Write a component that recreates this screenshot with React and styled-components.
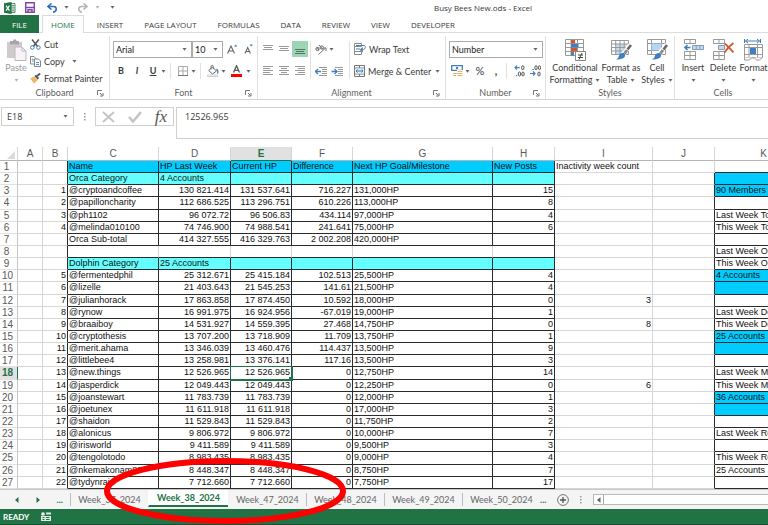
import React, { useState } from "react";
import styled, { createGlobalStyle, css } from "styled-components";

const UI_FONT = 'Lato, "Open Sans", sans-serif';
const WIDE_FONT = '"Open Sans", "Noto Sans", sans-serif';
const CELL_FONT = '"Liberation Sans", Arial, sans-serif';
const GREEN = "#217346";
const BLUE = "#3f7fbf";
const GRID = "#d6d6d6";
const INK = "#2b2b2b";

const GlobalStyle = createGlobalStyle`
  * {
    box-sizing: border-box;
  }
  body {
    margin: 0;
    background: #ffffff;
    font-family: ${UI_FONT};
    font-size: 9px;
    color: #3a3a3a;
  }
  button, input, select {
    font: inherit;
    color: inherit;
    margin: 0;
    padding: 0;
    border: 0;
    background: none;
  }
  svg {
    display: block;
    flex-shrink: 0;
  }
`;

const Window = styled.div`
  position: relative;
  display: flex;
  flex-direction: column;
  height: 100vh;
  overflow: hidden;
`;

/* ---------- title bar ---------- */

const TitleBar = styled.header`
  display: grid;
  grid-template-columns: 1fr auto 1fr;
  align-items: center;
  height: 15px;
  flex-shrink: 0;
`;

const QuickAccess = styled.div`
  display: flex;
  align-items: center;
  height: 12px;
  padding-left: 4px;
  gap: 4px;
`;

const Title = styled.h1`
  margin: 0;
  padding-left: 198px;
  font-family: ${WIDE_FONT};
  font-size: 8px;
  line-height: 14px;
  font-weight: 400;
  white-space: nowrap;
`;

const IconButton = styled.button`
  display: flex;
  align-items: center;
  justify-content: center;
  height: 16px;
  min-width: ${({ $w }) => $w || 16}px;
  flex-shrink: 0;
  background: ${({ $on }) => ($on ? "#9fd5b7" : "transparent")};
`;

/* ---------- ribbon ---------- */

const TabList = styled.nav`
  display: flex;
  gap: 1px;
  height: 18px;
  flex-shrink: 0;
  border-bottom: 1px solid #dcdcdc;
  font-family: ${WIDE_FONT};
  font-size: 8px;
`;

const RibbonTab = styled.button`
  height: 18px;
  padding: 0 9px;
  line-height: 16px;
  white-space: nowrap;
  border: 1px solid transparent;
  border-bottom: 0;

  ${({ $active }) =>
    $active &&
    css`
      background: #ffffff;
      border-color: #dcdcdc;
      color: ${GREEN};
      margin: 0 2px;
      padding: 0 8px;
    `}

  ${({ $file }) =>
    $file &&
    css`
      width: 39px;
      background: ${GREEN};
      color: #ffffff;
    `}
`;

const Ribbon = styled.div`
  display: flex;
  height: 67px;
  flex-shrink: 0;
  padding-top: 3px;
  border-bottom: 1px solid #d4d4d4;
  overflow: hidden;
`;

const Group = styled.section`
  display: flex;
  flex-direction: column;
  width: ${({ $w }) => $w}px;
  flex-shrink: 0;
  border-right: 1px solid #e1e1e1;
`;

const GroupBody = styled.div`
  flex: 1;
  display: flex;
  padding: ${({ $pad }) => $pad || "0"};
`;

const GroupFooter = styled.div`
  display: grid;
  grid-template-columns: 12px 1fr 12px;
  align-items: center;
  height: 12px;
  line-height: 12px;
  text-align: center;
  color: #5f5f5f;

  span {
    grid-column: 2;
  }
`;

const Stack = styled.div`
  display: flex;
  flex-direction: column;
  gap: ${({ $gap }) => $gap || 0}px;
`;

const Row = styled.div`
  display: flex;
  align-items: center;
  height: 16px;
  gap: ${({ $gap }) => $gap || 0}px;
`;

const Divider = styled.span`
  width: 1px;
  height: ${({ $h }) => $h || 16}px;
  margin: 0 ${({ $m }) => $m || 4}px;
  background: #e1e1e1;
  flex-shrink: 0;
`;

const LabelButton = styled.button`
  display: flex;
  align-items: center;
  gap: 3px;
  height: 16px;
  white-space: nowrap;
`;

const BigButton = styled.button`
  display: flex;
  flex-direction: column;
  align-items: center;
  width: ${({ $w }) => $w}px;
  padding-top: 3px;
  flex-shrink: 0;
  line-height: 12px;
  color: ${({ $dim }) => ($dim ? "#9a9a9a" : "inherit")};
  white-space: nowrap;

  > svg {
    margin-bottom: 1px;
  }
`;

const BigLine = styled.span`
  display: flex;
  align-items: center;
  justify-content: center;
  gap: 3px;
  height: 12px;
`;

const SelectBox = styled.label`
  display: grid;
  grid-template-columns: 1fr 9px;
  align-items: center;
  width: ${({ $w }) => $w}px;
  height: 17px;
  border: 1px solid #ababab;
  color: #222222;
  background: #ffffff;

  select {
    grid-area: 1 / 1 / 2 / 3;
    width: 100%;
    height: 15px;
    padding-left: 2px;
    appearance: none;
    outline: none;
  }
  svg {
    grid-area: 1 / 2 / 2 / 3;
    pointer-events: none;
  }
`;

const Letter = styled.span`
  font-size: ${({ $size }) => $size || 9}px;
  line-height: 12px;
  font-weight: ${({ $bold }) => ($bold ? 700 : 400)};
  font-style: ${({ $italic }) => ($italic ? "italic" : "normal")};
  text-decoration: ${({ $under }) => ($under ? "underline" : "none")};
`;

/* ---------- formula bar ---------- */

const FormulaBar = styled.div`
  display: flex;
  align-items: flex-start;
  height: 47px;
  flex-shrink: 0;
  padding: 7px 0 8px 1px;
  font-family: ${WIDE_FONT};
  font-size: 9px;
`;

const NameBox = styled.label`
  display: flex;
  align-items: center;
  width: 73px;
  height: 19px;
  padding: 0 5px;
  border: 1px solid #d0d0d0;

  input {
    flex: 1;
    min-width: 0;
    outline: none;
  }
`;

const Grip = styled.span`
  display: flex;
  align-items: center;
  justify-content: center;
  width: 21px;
  height: 19px;
`;

const FormulaTools = styled.div`
  display: flex;
  align-items: center;
  justify-content: space-between;
  width: 79px;
  height: 19px;
  padding: 0 6px;
  margin-right: 2px;
  border: 1px solid #d0d0d0;
`;

const FormulaInput = styled.input`
  && {
    flex: 1;
    align-self: stretch;
    padding: 0 8px 13px;
    border: 1px solid #d0d0d0;
    border-right: 0;
    outline: none;
  }
`;

/* ---------- sheet ---------- */

const SheetArea = styled.main`
  flex: 1;
  min-height: 0;
  overflow: hidden;
`;

const SheetTable = styled.table`
  width: 813px;
  height: 100%;
  table-layout: fixed;
  border-collapse: separate;
  border-spacing: 0;
  font-family: ${CELL_FONT};
  font-size: 9px;
  line-height: 11px;
  color: #111111;
`;

const HeadRow = styled.tr`
  height: 14px;
`;

const ColHead = styled.th`
  padding: 0;
  font-size: 10px;
  font-weight: ${({ $active }) => ($active ? 700 : 400)};
  color: ${({ $active }) => ($active ? GREEN : "#5a5a5a")};
  background: ${({ $active }) => ($active ? "#e1e1e1" : "#ffffff")};
  border-right: 1px solid ${GRID};
  border-bottom: 1px solid ${({ $active }) => ($active ? GREEN : "#b5b5b5")};
`;

const Corner = styled(ColHead)`
  vertical-align: bottom;

  svg {
    margin: 0 0 1px 7px;
  }
`;

const RowHead = styled.th`
  padding: 0 4px 0 0;
  font-size: 10px;
  text-align: ${({ $wide }) => ($wide ? "right" : "center")};
  font-weight: ${({ $active }) => ($active ? 700 : 400)};
  color: ${({ $active }) => ($active ? GREEN : "#5a5a5a")};
  background: ${({ $active }) => ($active ? "#e1e1e1" : "#ffffff")};
  border-right: 1px solid ${({ $active }) => ($active ? GREEN : "#c4c4c4")};
  border-bottom: 1px solid #e1e1e1;
`;

const FILLS = { head: "#00ccff", band: "#66ffff" };

const Cell = styled.td`
  padding: 0 1px;
  text-align: ${({ $num }) => ($num ? "right" : "left")};
  white-space: nowrap;
  overflow: hidden;
  background: ${({ $fill }) => FILLS[$fill] || "#ffffff"};
  border-right: 1px solid ${({ $right }) => ($right ? INK : GRID)};
  border-bottom: 1px solid ${({ $bottom }) => ($bottom ? INK : GRID)};

  ${({ $selected }) =>
    $selected &&
    css`
      position: relative;
      overflow: visible;
      outline: 1px solid ${GREEN};
      border-color: ${GREEN};

      &::after {
        content: "";
        position: absolute;
        right: -2px;
        bottom: -2px;
        width: 4px;
        height: 4px;
        background: ${GREEN};
      }
    `}
`;

/* ---------- bottom ---------- */

const SheetTabs = styled.nav`
  display: flex;
  align-items: center;
  height: 20px;
  flex-shrink: 0;
  background: #f4f4f4;
  border-top: 1px solid #c8c8c8;
`;

const TabScroll = styled.div`
  display: flex;
  align-items: center;
  justify-content: space-between;
  width: 70px;
  padding: 0 7px 0 15px;
  flex-shrink: 0;
  color: ${GREEN};
  font-weight: 700;
`;

const SheetTab = styled.button`
  width: ${({ $active }) => ($active ? 80 : 78)}px;
  height: ${({ $active }) => ($active ? 17 : 13)}px;
  flex-shrink: 0;
  border-left: 1px solid ${({ $line }) => ($line ? "#bdbdbd" : "transparent")};
  color: #666666;
  white-space: nowrap;
  align-self: ${({ $active }) => ($active ? "flex-start" : "center")};

  ${({ $active }) =>
    $active &&
    css`
      background: #ffffff;
      color: ${GREEN};
      font-weight: 700;
      border-bottom: 2px solid ${GREEN};
    `}
`;

const TabTail = styled.div`
  display: flex;
  align-items: center;
  gap: 11px;
  padding-right: 11px;
  color: ${GREEN};
  font-weight: 700;
`;

const ScrollTrack = styled.div`
  display: flex;
  flex: 1;
  height: 11px;
  border: 1px solid #b9b9b9;
  border-right: 0;
  background: #ffffff;
`;

const ScrollArrow = styled.button`
  display: flex;
  align-items: center;
  justify-content: center;
  width: 10px;
  border-right: 1px solid #ababab;
`;

const StatusBar = styled.footer`
  display: flex;
  align-items: center;
  gap: 12px;
  height: 16px;
  flex-shrink: 0;
  padding-left: 3px;
  color: #ffffff;
  background: ${GREEN};
  border-bottom: 1px solid #14522f;
  font-size: 8px;
  font-weight: 700;
`;

const Highlight = styled.svg`
  position: absolute;
  left: 104px;
  bottom: 1px;
  pointer-events: none;
`;

/* ---------- icons ---------- */

const Caret = ({ color = "#666666" }) => (
  <svg width="5" height="3" viewBox="0 0 5 3">
    <path d="M0.5 0h4L2.500 2.700z" fill={color} />
  </svg>
);

const Launcher = () => (
  <svg width="7" height="7" viewBox="0 0 7 7" fill="none" stroke="#777">
    <path d="M0.500 5V0.500H5M3 3l2.500 2.500M6 3v3H3" />
  </svg>
);

const ExcelLogo = () => (
  <svg width="12" height="12" viewBox="0 0 12 12">
    <path d="M7 1.500h4v9H7z" fill="#fff" stroke={GREEN} strokeWidth="0.800" />
    <path d="M8 3.500h2.500M8 5.200h2.500M8 7h2.500M8 8.800h2.500" stroke={GREEN} strokeWidth="0.800" />
    <path d="M0 1.200L7.500 0v12L0 10.800z" fill={GREEN} />
    <path d="M2 3.600l3.500 5M5.500 3.600L2 8.600" stroke="#fff" strokeWidth="1.200" />
  </svg>
);

const SaveIcon = () => (
  <svg width="10" height="11" viewBox="0 0 10 11">
    <path d="M0.700 0.700h8.600v9.600H0.700z" fill="#fff" stroke="#8047a8" strokeWidth="1.400" />
    <path d="M0.700 5.500h8.600M3 10V7.800h4V10" fill="none" stroke="#8047a8" strokeWidth="1.500" />
  </svg>
);

const UndoIcon = ({ color = "#2b6cb5", flip }) => (
  <svg width="11" height="10" viewBox="0 0 11 10">
    <g transform={flip ? "translate(11 0) scale(-1 1)" : undefined} fill="none" stroke={color}>
      <path d="M4.500 0.500L1 3.500l3.500 3" strokeWidth="1.600" />
      <path d="M1 3.500h5.500c3.500 0 4 5-0.500 5.800" strokeWidth="1.500" />
    </g>
  </svg>
);

const PasteIcon = () => (
  <svg width="21" height="22" viewBox="0 0 21 22">
    <path d="M1 3h15v16H1z" fill="#cfcace" />
    <path d="M4 2h3a1.800 1.800 0 0 1 3.600 0H13v3.500H4z" fill="#aaa4a8" />
    <path d="M9 8h7l4 4v9.500H9z" fill="#f6f2f5" stroke="#bdb8bc" />
    <path d="M16 8v4h4" fill="none" stroke="#bdb8bc" />
  </svg>
);

const CutIcon = () => (
  <svg width="11" height="11" viewBox="0 0 11 11" fill="none">
    <path d="M2 0.500l5.600 7M8.800 0.500L3.300 7.500" stroke="#555" strokeWidth="1.500" />
    <circle cx="2.300" cy="8.500" r="1.800" stroke={BLUE} />
    <circle cx="8.400" cy="8.500" r="1.800" stroke={BLUE} />
  </svg>
);

const CopyIcon = () => (
  <svg width="11" height="11" viewBox="0 0 11 11" fill="#fff" stroke="#777" strokeWidth="0.900">
    <path d="M0.500 0.500h3.500l2 2v5.500H0.500z" />
    <path d="M4.500 3h4l2 2v5.500H4.500z" />
    <path d="M1.800 3.200h2M1.800 5h2M6 6.500h3M6 8.400h3" stroke={BLUE} />
  </svg>
);

const PainterIcon = () => (
  <svg width="11" height="11" viewBox="0 0 11 11">
    <path d="M0.300 5.500L4 3.500l3.500 3.800L4 10.500z" fill="#eab566" />
    <path d="M4.300 3l1.800-1.300L9 5 7.800 6.800z" fill="#555" />
    <path d="M7 3l3.200-2.500" stroke="#555" strokeWidth="1.800" />
  </svg>
);

const BordersIcon = () => (
  <svg width="10" height="10" viewBox="0 0 10 10" fill="none" stroke="#aaa">
    <path d="M0.500 0.500h9v9h-9zM5 0.500v9M0.500 5h9" />
    <path d="M0 9.500h10" stroke="#777" />
  </svg>
);

const BucketIcon = () => (
  <svg width="12" height="12" viewBox="0 0 12 12" fill="none" stroke="#666">
    <path d="M5.500 2L9.500 6 5.500 9 1.700 5.500z" fill="#fff" />
    <path d="M4 4.500V1.500C4 0 6.300 0 6.300 1.500V4" strokeWidth="0.900" />
    <path d="M9.500 4c1.500 1 1.500 3 1 4.500" stroke={BLUE} strokeWidth="1.300" />
    <path d="M0.500 10h10v1.500h-10z" stroke="#bbb" fill="#fff" strokeWidth="0.700" />
  </svg>
);

const FontColorIcon = () => (
  <svg width="11" height="12" viewBox="0 0 11 12">
    <path d="M2.500 7.500L5.500 0.800l3 6.700M3.500 5.400h4" fill="none" stroke="#555" strokeWidth="1.300" />
    <path d="M0 9h11v3H0z" fill="#ff0000" />
  </svg>
);

const GrowIcon = ({ down }) => (
  <svg width={down ? 9 : 11} height="11" viewBox={down ? "1 0 9 11" : "0 0 11 11"}>
    <path
      d={down ? "M2 9.500l2.700-6 2.700 6M3 7.500h3.400" : "M0.500 9.500L4 2l3.500 7.500M1.800 7h4.400"}
      fill="none"
      stroke="#666"
      strokeWidth="1.100"
    />
    <path d={down ? "M6.500 0.500h3.500L8.200 2.500z" : "M7 2.500h3.500L8.700 0.500z"} fill={BLUE} />
  </svg>
);

const LINES = {
  top: "M0 2.500h10M1 4.500h8M0 6.500h10",
  middle: "M0 3.500h10M1 5.500h8M0 7.500h10",
  bottom: "M0 6.500h10M1 8.500h8M0 10.500h10",
  left: "M0 1.500h10M0 3.500h7M0 5.500h10M0 7.500h7M0 9.500h10",
  center: "M0 1.500h10M2 3.500h6M0 5.500h10M2 7.500h6M0 9.500h10",
  right: "M0 1.500h10M3 3.500h7M0 5.500h10M3 7.500h7M0 9.500h10",
};

const LinesIcon = ({ kind }) => (
  <svg width="10" height="12" viewBox="0 0 10 12">
    <path d={LINES[kind]} stroke={kind === "bottom" ? "#4f7762" : "#9a9a9a"} fill="none" />
  </svg>
);

const OrientIcon = () => (
  <svg width="12" height="11" viewBox="0 0 12 11" fill="none" stroke="#666">
    <circle cx="2.500" cy="5" r="1.600" />
    <path d="M3.800 6.300L2 3.200M4 1l4 4.500" />
    <circle cx="6.800" cy="3.500" r="1.600" />
    <path d="M3.500 10.500L10.500 4M8 4h3v3" stroke="#777" />
  </svg>
);

const IndentIcon = ({ out }) => (
  <svg width="12" height="11" viewBox="0 0 12 11" fill="none">
    <path d="M4 1.500h8M7 3.500h5M7 5.500h5M7 7.500h5M4 9.500h8" stroke="#999" />
    <path d="M0.500 5.500h5.500" stroke={BLUE} strokeWidth="1.500" />
    <path d={out ? "M3 3L0.500 5.500 3 8" : "M3.500 3L6 5.500 3.500 8"} stroke={BLUE} strokeWidth="1.400" />
  </svg>
);

const WrapIcon = () => (
  <svg width="12" height="12" viewBox="0 0 12 12" fill="none" stroke="#888">
    <path d="M0.500 0.500h7v3h-7zM0.500 8.500h7v3h-7zM0.500 3.500v5" />
    <path d="M2 2.500h8.500c1.500 1.500 1 4-2 4.200M2 6h4" stroke={BLUE} />
    <path d="M8.500 4.500L6 6.800l2.500 2z" fill={BLUE} />
  </svg>
);

const MergeIcon = () => (
  <svg width="11" height="12" viewBox="0 0 11 12" fill="none" stroke="#777">
    <path d="M0.500 0.500h10v11H0.500zM0.500 3h10M0.500 9h10M5.500 0.500V3M5.500 9v2.500" />
    <path d="M1.500 3.500h8v5h-8z" fill="#dcebf8" stroke="none" />
    <path d="M2 6h7M3.500 4.500L2 6l1.500 1.500M7.500 4.500L9 6 7.500 7.500" stroke={BLUE} />
  </svg>
);

const MoneyIcon = () => (
  <svg width="12" height="12" viewBox="0 0 12 12" fill="none">
    <path d="M0.700 0.700h10.600v4.600H0.700z" stroke={BLUE} strokeWidth="1.300" />
    <circle cx="6" cy="3" r="1.200" fill={BLUE} />
    <path d="M6 5h6v6H6z" fill="#fff" />
    <path d="M6.500 6.500h5M6.500 8.500h5M6.500 10.500h5M2 8.500h4M2 10.500h3" stroke="#e8ad58" strokeWidth="1.200" />
  </svg>
);

const DecimalIcon = ({ less }) => (
  <svg width="11" height="12" viewBox="0 0 11 12" fill="none" stroke="#555">
    <ellipse cx={less ? 6 : 8.8} cy="2.700" rx="1.200" ry="2" />
    {less && <ellipse cx="9.500" cy="2.700" rx="1.100" ry="2" />}
    {!less && <ellipse cx="5.500" cy="9" rx="1.200" ry="2" />}
    <ellipse cx="9" cy="9" rx="1.200" ry="2" />
    <path d={less ? "M2.500 4.500h1.200" : "M2 10.700h1.200"} />
    <path
      d={less ? "M0 8.500h5M3 6.500l2 2-2 2" : "M0.700 2.700h5M3 0.700l-2 2 2 2"}
      stroke={BLUE}
      strokeWidth="1.200"
    />
  </svg>
);

const ConditionalIcon = () => (
  <svg width="22" height="22" viewBox="0 0 22 22" fill="none">
    <path d="M1.500 0.500h18v16h-18zM1.500 4.500h18M1.500 8.500h18M1.500 12.500h18M7 0.500v16M13.500 0.500v16" stroke="#999" />
    <path d="M7 1h4v3.500H7zM7 9h6v3.500H7z" fill="#d9532c" />
    <path d="M7 5h7.500v3.500H7zM7 13h3v3.500H7z" fill={BLUE} />
    <path d="M11.500 12.500h10v9h-10z" fill="#fff" stroke="#888" />
    <path d="M14 16h5M14 18.500h5M18 14l-3 6.500" stroke="#444" />
  </svg>
);

const Brush = () => (
  <>
    <path d="M21 5.500l-8 9.500" stroke="#fff" strokeWidth="4.500" />
    <path d="M21 6l-3.500 4.500" stroke="#666" strokeWidth="2.600" />
    <path d="M17 11l-2.500 3.500" stroke="#8a8a8a" strokeWidth="3" />
    <path d="M13.500 14c2 0.500 2.300 3.500 0 5-2.300 1.400-5 1.500-7.500 1.500 2-1 2.500-2.500 3.300-4.500 0.700-1.700 2.400-2.400 4.200-2z" fill={BLUE} />
  </>
);

const TableIcon = () => (
  <svg width="22" height="22" viewBox="0 0 22 22" fill="none">
    <path d="M5.500 5h12v10h-12z" fill="#c5dcf0" />
    <path d="M1.500 1.500h17v14h-17zM1.500 5h17M1.500 8.500h17M1.500 12h17M5.700 1.500v14M10 1.500v14M14.200 1.500v14" stroke="#999" />
    <Brush />
  </svg>
);

const CellStylesIcon = () => (
  <svg width="22" height="22" viewBox="0 0 22 22" fill="none">
    <path d="M1.500 0.500h18v15h-18zM1.500 4.500h18M1.500 11.500h18M5.500 0.500v15M15.500 0.500v15" stroke="#999" />
    <path d="M5.500 4.500h10v7h-10z" fill="#b9d4ec" stroke="#8fb4d6" />
    <Brush />
  </svg>
);

const InsertIcon = () => (
  <svg width="21" height="22" viewBox="0 0 21 22" fill="none" stroke="#999">
    <path d="M1.500 0.500h11v4h-11zM7 0.500v4M1.500 12.500h11v8h-11zM1.500 16.500h11M7 12.500v8" />
    <path d="M9.500 6.500h11v4h-11zM13.200 6.500v4M16.800 6.500v4" fill="#c5dcf0" stroke="#7f9db8" />
    <path d="M2 8.500h5.500M4.500 6L2 8.500 4.500 11" stroke={BLUE} strokeWidth="1.600" />
  </svg>
);

const DeleteIcon = () => (
  <svg width="21" height="22" viewBox="0 0 21 22" fill="none" stroke="#999">
    <path d="M0.500 0.500h11v4h-11zM6 0.500v4M0.500 12.500h11v8h-11zM0.500 16.500h11M6 12.500v8" />
    <path d="M5.500 6.500h6v4h-6z" fill="#c5dcf0" stroke="#7f9db8" />
    <path d="M11.500 4.500c3 2 6 5.500 9 9M20.500 4c-3.500 2.500-6.500 5.500-9 9.500" stroke="#d9532c" strokeWidth="1.800" />
  </svg>
);

const FormatIcon = () => (
  <svg width="21" height="22" viewBox="0 0 21 22" fill="none" stroke="#999">
    <path d="M1.500 0v4M17.500 0v4M2.500 2h14M5 0l-2.500 2L5 4M14 0l2.500 2L14 4" stroke={BLUE} />
    <path d="M1.500 5.500h18v13h-18zM1.500 8.500h18M1.500 15.500h18M6 5.500v13M14.500 5.500v13" />
    <path d="M7 9h6v6H7z" fill={BLUE} stroke="none" />
    <path d="M1.500 18.500v2.500h5l2-2h3l2 2h3l3-2.500" fill="#fff" />
  </svg>
);

const CancelIcon = () => (
  <svg width="13" height="12" viewBox="0 0 13 12">
    <path d="M1 1l11 10M12 1L1 11" stroke="#c3c3c3" strokeWidth="1.800" />
  </svg>
);

const EnterIcon = () => (
  <svg width="14" height="12" viewBox="0 0 14 12">
    <path d="M1 6l4 4.500L13 1" fill="none" stroke="#c3c3c3" strokeWidth="2.500" />
  </svg>
);

const FxLabel = styled.em`
  font-family: "Liberation Serif", "Times New Roman", serif;
  font-size: 17px;
  line-height: 16px;
  color: #555555;
`;

const Dots = () => (
  <svg width="2" height="8" viewBox="0 0 2 8" fill="#999">
    <path d="M0 0h1.500v1.500H0zM0 3h1.500v1.500H0zM0 6h1.500v1.500H0z" />
  </svg>
);

const Arrow = ({ left, color = GREEN }) => (
  <svg width="4" height="6" viewBox="0 0 4 6">
    <path d={left ? "M3.500 0v6L0 3z" : "M0.500 0v6L4 3z"} fill={color} />
  </svg>
);

const PlusIcon = () => (
  <svg width="12" height="12" viewBox="0 0 12 12" fill="none" stroke="#777">
    <circle cx="6" cy="6" r="5.400" />
    <path d="M6 3v6M3 6h6" stroke="#555" strokeWidth="1.300" />
  </svg>
);

const MacroIcon = () => (
  <svg width="10" height="9" viewBox="0 0 10 9">
    <circle cx="2" cy="2" r="1.800" fill="#fff" />
    <path d="M5 0.500h5v2H5zM0 4h10v5H0z" fill="#dfeee5" />
    <path d="M1.500 5.500h2M5 5.500h3.500M1.500 7.500h2M5 7.500h3.500" stroke={GREEN} />
  </svg>
);

/* ---------- data ---------- */

const TABS = ["HOME", "INSERT", "PAGE LAYOUT", "FORMULAS", "DATA", "REVIEW", "VIEW", "DEVELOPER"];
const SHEETS = ["Week_37_2024", "Week_38_2024", "Week_47_2024", "Week_48_2024", "Week_49_2024", "Week_50_2024"];
const COLS = ["A", "B", "C", "D", "E", "F", "G", "H", "I", "J", "K"];
const WIDTHS = [18, 25, 25, 91, 72, 61, 61, 140, 62, 98, 62, 98];

// B, C, D, E, F, G, H
const ROWS = [
  ["", "Name", "HP Last Week", "Current HP", "Difference", "Next HP Goal/Milestone", "New Posts"],
  ["", "Orca Category", "4 Accounts", "", "", "", ""],
  ["1", "@cryptoandcoffee", "130 821.414", "131 537.641", "716.227", "131,000HP", "15"],
  ["2", "@papilloncharity", "112 686.525", "113 296.751", "610.226", "113,000HP", "8"],
  ["3", "@ph1102", "96 072.72", "96 506.83", "434.114", "97,000HP", "4"],
  ["4", "@melinda010100", "74 746.900", "74 988.541", "241.641", "75,000HP", "6"],
  ["", "Orca Sub-total", "414 327.555", "416 329.763", "2 002.208", "420,000HP", ""],
  ["", "", "", "", "", "", ""],
  ["", "Dolphin Category", "25 Accounts", "", "", "", ""],
  ["5", "@fermentedphil", "25 312.671", "25 415.184", "102.513", "25,500HP", "4"],
  ["6", "@lizelle", "21 403.643", "21 545.253", "141.61", "21,500HP", "4"],
  ["7", "@julianhorack", "17 863.858", "17 874.450", "10.592", "18,000HP", "0"],
  ["8", "@rynow", "16 991.975", "16 924.956", "-67.019", "19,000HP", "1"],
  ["9", "@braaiboy", "14 531.927", "14 559.395", "27.468", "14,750HP", "0"],
  ["10", "@cryptothesis", "13 707.200", "13 718.909", "11.709", "13,750HP", "1"],
  ["11", "@merit.ahama", "13 346.039", "13 460.476", "114.437", "13,500HP", "9"],
  ["12", "@littlebee4", "13 258.981", "13 376.141", "117.16", "13,500HP", "3"],
  ["13", "@new.things", "12 526.965", "12 526.965", "0", "12,750HP", "14"],
  ["14", "@jasperdick", "12 049.443", "12 049.443", "0", "12,250HP", "0"],
  ["15", "@joanstewart", "11 783.739", "11 783.739", "0", "12,000HP", "1"],
  ["16", "@joetunex", "11 611.918", "11 611.918", "0", "17,000HP", "3"],
  ["17", "@shaidon", "11 529.843", "11 529.843", "0", "11,750HP", "2"],
  ["18", "@alonicus", "9 806.972", "9 806.972", "0", "10,000HP", "7"],
  ["19", "@irisworld", "9 411.589", "9 411.589", "0", "9,500HP", "3"],
  ["20", "@tengolotodo", "8 983.435", "8 983.435", "0", "9,000HP", "4"],
  ["21", "@nkemakonam89", "8 448.347", "8 448.347", "0", "8,750HP", "7"],
  ["22", "@tydynrain", "7 712.660", "7 712.660", "0", "7,750HP", "17"],
];

const INACTIVITY = { 1: "Inactivity week count", 12: "3", 14: "8", 19: "6" };
const SUMMARY = {
  3: "90 Members",
  5: "Last Week Total",
  6: "This Week Total",
  8: "Last Week Orca",
  9: "This Week Orca",
  10: "4 Accounts",
  13: "Last Week Dolphin",
  14: "This Week Dolphin",
  15: "25 Accounts",
  18: "Last Week Minnow",
  19: "This Week Minnow",
  20: "36 Accounts",
  23: "Last Week Redfish",
  25: "This Week Redfish",
  26: "25 Accounts",
};
const SUMMARY_FILLED = [2, 3, 10, 11, 15, 16, 20, 21];

/* ---------- parts ---------- */

const RibbonGroup = ({ label, width, pad, launcher = true, children }) => (
  <Group $w={width} aria-label={label}>
    <GroupBody $pad={pad}>{children}</GroupBody>
    <GroupFooter>
      <span>{label}</span>
      {launcher && <Launcher />}
    </GroupFooter>
  </Group>
);

const Dropdown = ({ label, width, options }) => (
  <SelectBox $w={width}>
    <select aria-label={label}>
      {options.map((o) => (
        <option key={o}>{o}</option>
      ))}
    </select>
    <Caret />
  </SelectBox>
);

const Large = ({ icon, width, lines, dim }) => (
  <BigButton $w={width} $dim={dim}>
    {icon}
    <BigLine>{lines[0]}</BigLine>
    <BigLine>
      {lines[1]}
      <Caret color={dim ? "#b5b5b5" : undefined} />
    </BigLine>
  </BigButton>
);

const SheetRow = ({ values, n }) => {
  const isBlank = n === 8;
  const fill = n === 1 ? "head" : n === 2 || n === 9 ? "band" : undefined;
  const isText = fill !== undefined;
  return (
    <tr>
      <RowHead $active={n === 18} $wide={n > 9}>{n}</RowHead>
      <Cell />
      <Cell $num $right>{values[0]}</Cell>
      {values.slice(1).map((value, i) => (
        <Cell
          key={i}
          $fill={fill}
          $num={!isText && i !== 0 && i !== 4}
          $right={!isBlank || i === 5}
          $bottom
          $selected={n === 18 && i === 2}
        >
          {value}
        </Cell>
      ))}
      <Cell $num={n > 1}>{INACTIVITY[n]}</Cell>
      <Cell $right={n > 1} />
      <Cell $bottom $fill={SUMMARY_FILLED.includes(n) ? "head" : undefined}>{SUMMARY[n]}</Cell>
    </tr>
  );
};

const App = () => {
  const [formula, setFormula] = useState("12526.965");
  const [sheet, setSheet] = useState("Week_38_2024");

  return (
    <Window>
      <GlobalStyle />
      <TitleBar>
        <QuickAccess>
          <ExcelLogo />
          <IconButton $w={20} aria-label="Save"><SaveIcon /></IconButton>
          <IconButton aria-label="Undo"><UndoIcon /></IconButton>
          <Caret />
          <IconButton $w={18} aria-label="Redo"><UndoIcon flip color="#b5b5b5" /></IconButton>
          <Caret color="#b5b5b5" />
          <IconButton aria-label="Customize"><Caret /></IconButton>
        </QuickAccess>
        <Title>Busy Bees New.ods - Excel</Title>
      </TitleBar>

      <TabList>
        <RibbonTab $file>FILE</RibbonTab>
        {TABS.map((tab) => (
          <RibbonTab key={tab} $active={tab === "HOME"}>{tab}</RibbonTab>
        ))}
      </TabList>

      <Ribbon>
        <RibbonGroup label="Clipboard" width={110} pad="0 0 0 2px">
          <Large icon={<PasteIcon />} width={28} lines={["Paste"]} dim />
          <Stack $gap={1}>
            <LabelButton><CutIcon />Cut</LabelButton>
            <LabelButton><CopyIcon />Copy<IconButton as="span" $w={14}><Caret /></IconButton></LabelButton>
            <LabelButton><PainterIcon />Format Painter</LabelButton>
          </Stack>
        </RibbonGroup>

        <RibbonGroup label="Font" width={148} pad="5px 0 0 3px">
          <Stack $gap={6}>
            <Row>
              <Dropdown label="Font name" width={79} options={["Arial"]} />
              <Dropdown label="Font size" width={31} options={["10"]} />
              <IconButton $w={18} aria-label="Increase font size"><GrowIcon /></IconButton>
              <IconButton $w={14} aria-label="Decrease font size"><GrowIcon down /></IconButton>
            </Row>
            <Row>
              <IconButton aria-label="Bold"><Letter $bold>B</Letter></IconButton>
              <IconButton aria-label="Italic"><Letter $bold $italic>I</Letter></IconButton>
              <IconButton aria-label="Underline"><Letter $bold $under>U</Letter></IconButton>
              <Caret />
              <Divider />
              <IconButton aria-label="Borders"><BordersIcon /></IconButton>
              <Caret />
              <Divider />
              <IconButton aria-label="Fill color"><BucketIcon /></IconButton>
              <Caret />
              <IconButton $w={20} aria-label="Font color"><FontColorIcon /></IconButton>
              <Caret />
            </Row>
          </Stack>
        </RibbonGroup>

        <RibbonGroup label="Alignment" width={188} pad="5px 0 0 2px">
          <Stack $gap={6}>
            <Row>
              <IconButton aria-label="Top align"><LinesIcon kind="top" /></IconButton>
              <IconButton aria-label="Middle align"><LinesIcon kind="middle" /></IconButton>
              <IconButton $on aria-label="Bottom align"><LinesIcon kind="bottom" /></IconButton>
            </Row>
            <Row>
              <IconButton aria-label="Align left"><LinesIcon kind="left" /></IconButton>
              <IconButton aria-label="Center"><LinesIcon kind="center" /></IconButton>
              <IconButton aria-label="Align right"><LinesIcon kind="right" /></IconButton>
            </Row>
          </Stack>
          <Divider $h={38} $m={2} />
          <Stack $gap={6}>
            <Row>
              <IconButton aria-label="Orientation"><OrientIcon /></IconButton>
              <Caret />
            </Row>
            <Row>
              <IconButton aria-label="Decrease indent"><IndentIcon out /></IconButton>
              <IconButton aria-label="Increase indent"><IndentIcon /></IconButton>
            </Row>
          </Stack>
          <Divider $h={38} $m={4} />
          <Stack $gap={6}>
            <LabelButton><WrapIcon />Wrap Text</LabelButton>
            <LabelButton><MergeIcon />Merge &amp; Center<IconButton as="span" $w={6}><Caret /></IconButton></LabelButton>
          </Stack>
        </RibbonGroup>

        <RibbonGroup label="Number" width={100} pad="5px 0 0 3px">
          <Stack $gap={6}>
            <Row><Dropdown label="Number format" width={94} options={["Number"]} /></Row>
            <Row>
              <IconButton aria-label="Accounting format"><MoneyIcon /></IconButton>
              <Caret />
              <IconButton $w={20} aria-label="Percent style"><Letter $size={11}>%</Letter></IconButton>
              <IconButton $w={12} aria-label="Comma style"><Letter $size={11} $bold>,</Letter></IconButton>
              <Divider />
              <IconButton aria-label="Increase decimal"><DecimalIcon /></IconButton>
              <IconButton aria-label="Decrease decimal"><DecimalIcon less /></IconButton>
            </Row>
          </Stack>
        </RibbonGroup>

        <RibbonGroup label="Styles" width={129} pad="0 0 0 3px" launcher={false}>
          <Large icon={<ConditionalIcon />} width={52} lines={["Conditional", "Formatting"]} />
          <Large icon={<TableIcon />} width={40} lines={["Format as", "Table"]} />
          <Large icon={<CellStylesIcon />} width={32} lines={["Cell", "Styles"]} />
        </RibbonGroup>

        <RibbonGroup label="Cells" width={97} pad="0 0 0 3px" launcher={false}>
          <Large icon={<InsertIcon />} width={30} lines={["Insert"]} />
          <Large icon={<DeleteIcon />} width={30} lines={["Delete"]} />
          <Large icon={<FormatIcon />} width={31} lines={["Format"]} />
        </RibbonGroup>
      </Ribbon>

      <FormulaBar>
        <NameBox>
          <input aria-label="Name box" defaultValue="E18" />
          <Caret />
        </NameBox>
        <Grip><Dots /></Grip>
        <FormulaTools>
          <button aria-label="Cancel"><CancelIcon /></button>
          <button aria-label="Enter"><EnterIcon /></button>
          <button aria-label="Insert function"><FxLabel>fx</FxLabel></button>
        </FormulaTools>
        <FormulaInput aria-label="Formula" value={formula} onChange={(e) => setFormula(e.target.value)} />
      </FormulaBar>

      <SheetArea>
        <SheetTable>
          <colgroup>
            {WIDTHS.map((w, i) => (
              <col key={i} width={w} />
            ))}
          </colgroup>
          <thead>
            <HeadRow>
              <Corner>
                <svg width="8" height="8" viewBox="0 0 8 8"><path d="M8 0v8H0z" fill="#dadada" /></svg>
              </Corner>
              {COLS.map((col) => (
                <ColHead key={col} $active={col === "E"}>{col}</ColHead>
              ))}
            </HeadRow>
          </thead>
          <tbody>
            {ROWS.map((values, i) => (
              <SheetRow key={i} values={values} n={i + 1} />
            ))}
          </tbody>
        </SheetTable>
      </SheetArea>

      <SheetTabs>
        <TabScroll>
          <Arrow left />
          <Arrow />
          <span>...</span>
        </TabScroll>
        {SHEETS.map((name, i) => (
          <SheetTab key={name} $active={name === sheet} $line={i !== 1 && i !== 2} onClick={() => setSheet(name)}>
            {name}
          </SheetTab>
        ))}
        <TabTail>
          <span>...</span>
          <button aria-label="New sheet"><PlusIcon /></button>
          <Dots />
        </TabTail>
        <ScrollTrack>
          <ScrollArrow aria-label="Scroll left"><Arrow left color="#666666" /></ScrollArrow>
        </ScrollTrack>
      </SheetTabs>

      <StatusBar>
        <span>READY</span>
        <MacroIcon />
      </StatusBar>

      <Highlight width="242" height="66" viewBox="0 0 242 66" aria-hidden="true">
        <ellipse cx="121" cy="33" rx="118" ry="30" fill="none" stroke="#ff0000" strokeWidth="6" />
      </Highlight>
    </Window>
  );
};

export default App;
